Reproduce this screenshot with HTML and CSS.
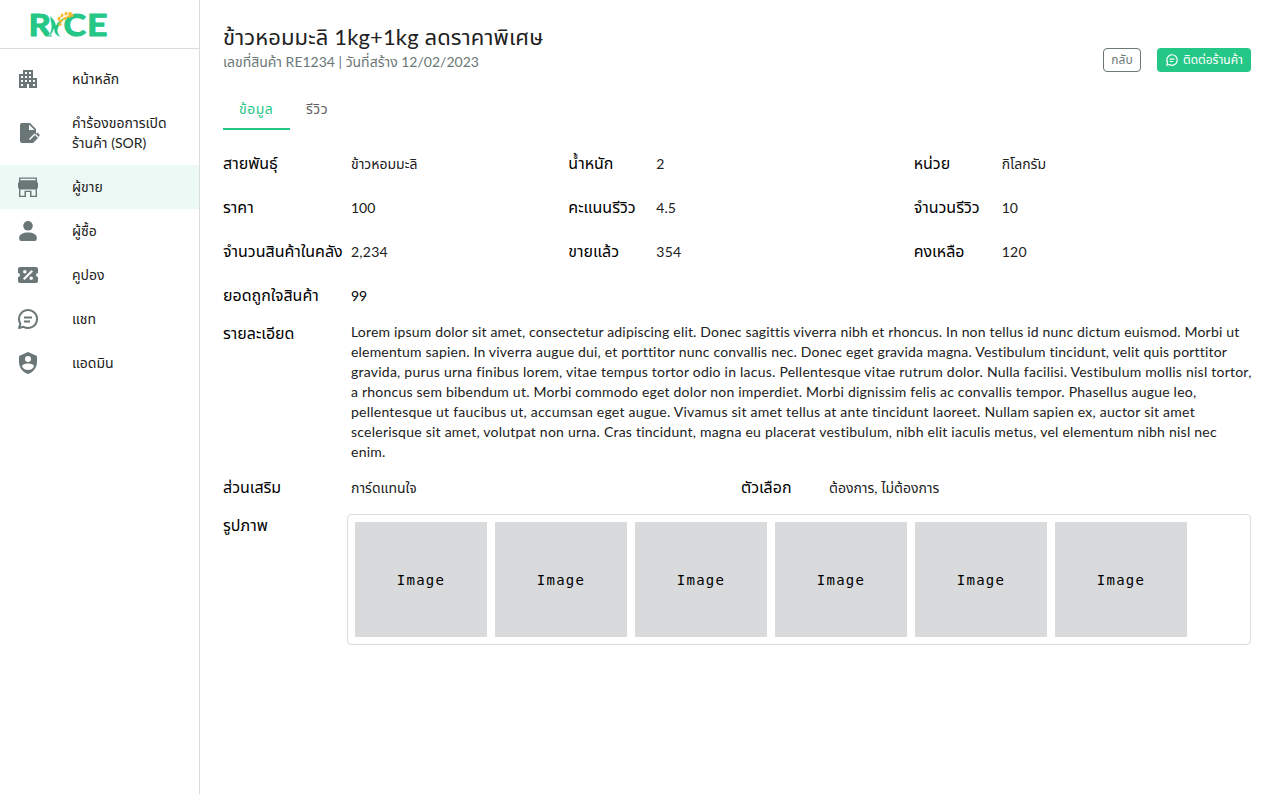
FILE: index.html
```html
<!DOCTYPE html>
<html lang="th">
<head>
<meta charset="utf-8">
<title>RICE</title>
<link rel="stylesheet" href="styles.css">
</head>
<body>
<div class="app">
  <aside class="sidebar">
    <div class="brand">
      <svg class="logo" width="80" height="28" viewBox="0 0 80 28">
        <g class="logo-letters">
          <text x="-1.500" y="25" textLength="22.500" lengthAdjust="spacingAndGlyphs">R</text>
          <text x="33.500" y="25" textLength="22.500" lengthAdjust="spacingAndGlyphs">C</text>
          <text x="57" y="25" textLength="20.500" lengthAdjust="spacingAndGlyphs">E</text>
        </g>
        <path class="leaf" d="M20 5c4 3 5.500 6 6 9c3-5 7-7 11-8c-5 4-8 8-9 12c-1 3 1 6 3 8c-5-1-7-4-7-8c-1 3-2 5-5 7c2-5 3-9 2-13c-.5-3-1-5-1-7z"/>
        <g class="grain">
          <ellipse cx="29" cy="7.500" rx="2" ry="1.300" transform="rotate(-60 29 7.500)"/>
          <ellipse cx="32" cy="4.500" rx="2" ry="1.300" transform="rotate(-65 32 4.500)"/>
          <ellipse cx="36" cy="2.600" rx="2" ry="1.300" transform="rotate(-50 36 2.600)"/>
          <ellipse cx="40" cy="2.500" rx="2" ry="1.300" transform="rotate(-20 40 2.500)"/>
          <ellipse cx="31" cy="10" rx="2.200" ry="1.300" transform="rotate(-20 31 10)"/>
          <ellipse cx="35" cy="7.300" rx="2.200" ry="1.300" transform="rotate(-15 35 7.300)"/>
          <ellipse cx="39" cy="5.500" rx="2.200" ry="1.300"/>
          <ellipse cx="42" cy="4.500" rx="1.800" ry="1.200" transform="rotate(15 42 4.500)"/>
          <ellipse cx="30" cy="13.500" rx="1.700" ry="1.200"/>
        </g>
      </svg>
    </div>
    <nav class="menu">
      <a class="item"><svg class="icon" viewBox="0 0 24 24"><path d="M17 11V3H7v4H3v14h8v-4h2v4h8V11h-4zM7 19H5v-2h2v2zm0-4H5v-2h2v2zm0-4H5V9h2v2zm4 4H9v-2h2v2zm0-4H9V9h2v2zm0-4H9V5h2v2zm4 8h-2v-2h2v2zm0-4h-2V9h2v2zm0-4h-2V5h2v2zm4 12h-2v-2h2v2zm0-4h-2v-2h2v2z"/></svg><span>หน้าหลัก</span></a>
      <a class="item tall"><svg class="icon" viewBox="0 0 24 24"><path d="M6 2a2 2 0 0 0-2 2v16a2 2 0 0 0 2 2h8v-2.500l6-6V8l-6-6zm7 1.500L18.500 9H13z"/><path class="pen" d="M15.500 20.500l5.500-5.500"/><path d="M14 22v-3l5-5 3 3-5 5zM20 13l1-1q.5-.3 1 0l1.500 1.500q.5.500 0 1L22.500 16z"/></svg><span class="sor">คำร้องขอการเปิด<br>ร้านค้า (SOR)</span></a>
      <a class="item active"><svg class="icon" viewBox="0 0 24 24"><path fill-rule="evenodd" d="M3 2.500h18v4l1 2v4l-1 1.500v8h-7v-5h-4v5H3v-8l-1-1.500v-4l1-2zm1.400 1.300v1.400h15.200V3.800zm0 10.700v6.200h4.100v-5h7v5h4.100v-6.200z"/></svg><span>ผู้ขาย</span></a>
      <a class="item"><svg class="icon" viewBox="0 0 24 24"><circle cx="12" cy="6.800" r="4.800"/><path d="M3.200 20v-1.500c0-3 4-5 8.800-5s8.800 2 8.800 5V20q0 2-2 2H5.200q-2 0-2-2z"/></svg><span>ผู้ซื้อ</span></a>
      <a class="item"><svg class="icon" viewBox="0 0 24 24"><path d="M4 4a2 2 0 0 0-2 2v4a2 2 0 0 1 0 4v4a2 2 0 0 0 2 2h16a2 2 0 0 0 2-2v-4a2 2 0 0 1 0-4V6a2 2 0 0 0-2-2H4m11.500 3L17 8.500 8.500 17 7 15.500 15.500 7m-6.690.040a1.770 1.770 0 1 1 0 3.540 1.770 1.770 0 0 1 0-3.540m6.380 6.380a1.770 1.770 0 1 1 0 3.540 1.770 1.770 0 0 1 0-3.540z"/></svg><span>คูปอง</span></a>
      <a class="item"><svg class="icon line" viewBox="0 0 24 24"><path d="M3 21l1.400-4.200A9 9 0 1 1 7.500 19.800zM8 10.500h8M8 14.500h6"/></svg><span>แชท</span></a>
      <a class="item"><svg class="icon" viewBox="0 0 24 24"><path d="M12 1 3 5v6c0 5.550 3.840 10.740 9 12 5.160-1.260 9-6.450 9-12V5l-9-4m0 4a3 3 0 1 1 0 6 3 3 0 0 1 0-6m0 14q-4 0-6-3.530c0-1.650 2.710-3 6-3s6 1.320 6 3Q16 19 12 19z"/></svg><span>แอดมิน</span></a>
    </nav>
  </aside>
  <main class="main">
    <header class="head">
      <div>
        <h1 class="title">ข้าวหอมมะลิ 1kg+1kg ลดราคาพิเศษ</h1>
        <p class="sub">เลขที่สินค้า RE1234 | วันที่สร้าง 12/02/2023</p>
      </div>
      <div class="actions">
        <button class="btn outline">กลับ</button>
        <button class="btn solid"><svg class="icon line small" viewBox="0 0 24 24"><path d="M3 21l1.400-4.200A9 9 0 1 1 7.500 19.800zM8 10.500h8M8 14.500h6"/></svg><span>ติดต่อร้านค้า</span></button>
      </div>
    </header>
    <div class="tabs"><a class="tab on">ข้อมูล</a><a class="tab">รีวิว</a></div>
    <section class="grid">
      <div class="field wide"><b>สายพันธุ์</b><span>ข้าวหอมมะลิ</span></div>
      <div class="field"><b>น้ำหนัก</b><span>2</span></div>
      <div class="field"><b>หน่วย</b><span>กิโลกรัม</span></div>
      <div class="field wide"><b>ราคา</b><span>100</span></div>
      <div class="field"><b>คะแนนรีวิว</b><span>4.5</span></div>
      <div class="field"><b>จำนวนรีวิว</b><span>10</span></div>
      <div class="field wide"><b>จำนวนสินค้าในคลัง</b><span class="num">2,234</span></div>
      <div class="field"><b>ขายแล้ว</b><span class="num">354</span></div>
      <div class="field"><b>คงเหลือ</b><span class="num">120</span></div>
      <div class="field wide"><b>ยอดถูกใจสินค้า</b><span class="dark">99</span></div>
    </section>
    <section class="field wide detail">
      <b>รายละเอียด</b>
      <p class="para"><span class="l1">Lorem ipsum dolor sit amet, consectetur adipiscing elit. Donec sagittis viverra nibh et rhoncus. In non tellus id nunc dictum euismod. Morbi ut</span><br><span class="l2">elementum sapien. In viverra augue dui, et porttitor nunc convallis nec. Donec eget gravida magna. Vestibulum tincidunt, velit quis porttitor</span><br>gravida, purus urna finibus lorem, vitae tempus tortor odio in lacus. Pellentesque vitae rutrum dolor. Nulla facilisi. Vestibulum mollis nisl tortor,<br><span class="l4">a rhoncus sem bibendum ut. Morbi commodo eget dolor non imperdiet. Morbi dignissim felis ac convallis tempor. Phasellus augue leo,</span><br>pellentesque ut faucibus ut, accumsan eget augue. Vivamus sit amet tellus at ante tincidunt laoreet. Nullam sapien ex, auctor sit amet<br>scelerisque sit amet, volutpat non urna. Cras tincidunt, magna eu placerat vestibulum, nibh elit iaculis metus, vel elementum nibh nisl nec<br>enim.</p>
    </section>
    <section class="grid two">
      <div class="field wide"><b>ส่วนเสริม</b><span>การ์ดแทนใจ</span></div>
      <div class="field"><b>ตัวเลือก</b><span>ต้องการ, ไม่ต้องการ</span></div>
    </section>
    <section class="pictures">
      <b>รูปภาพ</b>
      <div class="gallery">
        <div class="pic">Image</div><div class="pic">Image</div><div class="pic">Image</div><div class="pic">Image</div><div class="pic">Image</div><div class="pic">Image</div>
      </div>
    </section>
  </main>
</div>
</body>
</html>
```
FILE: styles.css
```css
* { box-sizing: border-box; }
body { margin: 0; background: #fff; color: #212121; font: 14px/20px Lato, "Noto Sans Thai", "Noto Sans", sans-serif; -webkit-font-smoothing: antialiased; }
h1, p { margin: 0; font-weight: 400; }
b { font-weight: 400; }
.app { display: flex; height: 794px; overflow: hidden; }
.sidebar { width: 200px; flex: none; border-right: 1px solid #dcdcdc; }
.brand { height: 49px; border-bottom: 1px solid #dcdcdc; padding: 11px 0 0 30px; }
.logo { display: block; overflow: visible; }
.logo-letters { font: 700 30.5px Lato, sans-serif; fill: #25c787; stroke: #25c787; stroke-width: 1; stroke-linejoin: round; }
.leaf { fill: #25c787; stroke: #fff; stroke-width: .5; }
.grain { fill: #fcb827; }
.menu { padding-top: 8px; }
.item { display: flex; align-items: center; height: 44px; padding-left: 16px; gap: 32px; white-space: nowrap; }
.item.tall { height: 64px; }
.item.active { background: #edf9f5; }
.sor { letter-spacing: .03px; }
.icon { width: 24px; height: 24px; flex: none; fill: #6b7777; }
.icon .pen { stroke: #fff; stroke-width: 7; }
.icon.line { fill: none; stroke: #6b7777; stroke-width: 2; stroke-linejoin: round; }
.icon.line.small { width: 14px; height: 14px; stroke: #fff; }
.main { flex: 1; padding: 21px 29px 0 23px; min-width: 0; }
.head { display: flex; justify-content: space-between; height: 51px; }
.title { font-size: 22px; line-height: 31px; white-space: nowrap; letter-spacing: .13px; }
.sub { color: #6b7777; line-height: 20px; white-space: nowrap; }
.actions { display: flex; gap: 16px; align-self: flex-end; }
.btn { display: flex; align-items: center; justify-content: center; gap: 4px; height: 24px; padding: 0; border-radius: 4px; font: inherit; font-size: 12px; white-space: nowrap; }
.outline { width: 38px; border: 1px solid #6b7777; background: #fff; color: #6b7777; }
.solid { width: 94px; border: 0; background: #25c787; color: #fff; }
.tabs { display: flex; margin-top: 16px; height: 42px; }
.tab { height: 42px; padding: 0 16px; line-height: 42px; color: #616161; letter-spacing: .5px; }
.tab.on { width: 67px; color: #25c787; border-bottom: 2px solid #25c787; }
.grid { display: grid; grid-template-columns: repeat(3, 1fr); column-gap: 8px; grid-auto-rows: 44px; margin-top: 12px; }
.field { display: grid; grid-template-columns: 80px 1fr; column-gap: 8px; align-items: center; white-space: nowrap; }
.field.wide { grid-template-columns: 120px 1fr; }
.field b, .pictures b { font-size: 16px; line-height: 22px; padding-bottom: 2px; color: #000; }
.num { letter-spacing: .25px; }
.dark { color: #000; }
.detail { align-items: start; margin-top: 4px; }
.para { line-height: 20px; letter-spacing: .235px; }
.l1 { letter-spacing: .178px; }
.l2 { letter-spacing: .192px; }
.l4 { letter-spacing: .217px; }
.grid.two { grid-template-columns: repeat(2, 1fr); margin-top: 4px; }
.pictures { display: flex; margin-top: 4px; }
.pictures b { width: 124px; flex: none; }
.gallery { flex: 1; display: flex; gap: 8px; height: 131px; padding: 7px; border: 1px solid #dcdcdc; border-radius: 4px; }
.pic { width: 132px; height: 115px; background: #d9dadc; color: #000; display: flex; align-items: center; justify-content: center; font: 14px "DejaVu Sans Mono", monospace; letter-spacing: 1.3px; }
```
